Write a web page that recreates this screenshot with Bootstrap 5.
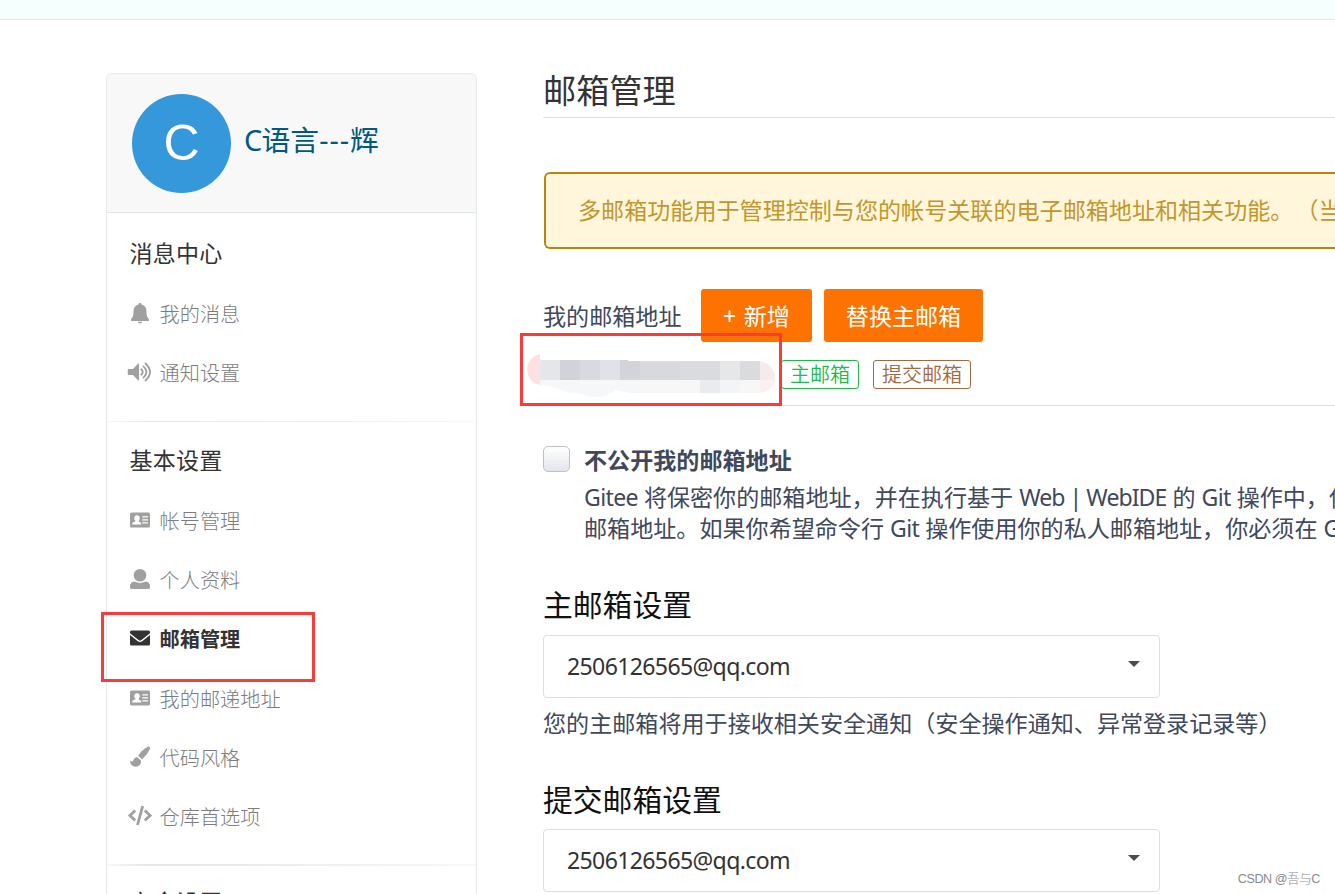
<!DOCTYPE html>
<html lang="zh-CN">
<head>
<meta charset="utf-8">
<meta name="viewport" content="width=device-width, initial-scale=1">
<title>邮箱管理</title>
<link rel="stylesheet" href="https://cdn.jsdelivr.net/npm/bootstrap@5.3.0/dist/css/bootstrap.min.css">
<style>
body{font-family:"Noto Sans","Noto Sans CJK SC",sans-serif;font-size:23.08px;color:#40485b;height:894px;overflow:hidden;line-height:31px;text-spacing-trim:space-all}
.topbar{height:20px;background:#f5fffe;border-bottom:1px solid #e3e9ed}
.layout{padding:53px 0 0 106px;gap:66px;height:874px;overflow:hidden}
.side{width:371px;border:1px solid #e3e9ed;border-bottom:0;border-radius:6px 6px 0 0;height:821px}
.side-head{height:139px;background:#f8f8f8;border-bottom:1px solid #e1e7eb;border-radius:5px 5px 0 0;padding:1px 0 0 25px}
.avatar{width:99px;height:99px;background:#3498db;color:#fff;font:50px "Liberation Sans",sans-serif;padding-bottom:1px}
.uname{color:#005980;font-size:28.8px;margin:-7px 0 0 13px;line-height:40px}
.dash{letter-spacing:1px}
.lat{letter-spacing:-.65px}
.lat-tight{letter-spacing:-.95px}
.sec{padding:9.5px 0 18.5px 22.5px;border-bottom:1.6px solid;border-image:linear-gradient(90deg,#f8f8f8,#e6e6e6 12%,#f7f7f7) 1}
.sec + .sec{border-bottom-width:2px;padding-top:8px}
.sec-title{height:62px;line-height:60px;color:#333;letter-spacing:.2px}
.item{height:59.1px;font-size:20.2px;color:#7c7c7c;font-weight:300;margin-left:-3px}
.item svg{width:26px;height:24px;fill:#a0a0a0;margin:-3px 7px 0 0}
.item.active{color:#333;font-weight:700}
.item.active svg{fill:#333}
.mark-box{position:absolute;border:3px solid #fb3a3a;pointer-events:none}
.main{width:792px}
.page-title{font-size:33.2px;line-height:36px;height:45px;border-bottom:1px solid #e1e3e5;color:#333;font-weight:400}
.notice{margin-top:54px;height:77px;border:2px solid #b8860b;border-right:0;border-radius:6px 0 0 6px;background:#fff6db;color:#c2962b;padding-left:32px;margin-left:1px;overflow:hidden}
.btn-or{height:53px;background:#fe7300;color:#fff;border:0;border-radius:3px;font-size:23.08px;padding:2px 0 0;line-height:31px}
.mail-row{height:64px;border-bottom:1px solid #dcdddf;padding:1px 0 0 238px}
.tagx{height:29px;border:1px solid;border-radius:3px;font-size:20px;font-weight:350;line-height:27px}
.mosaic{position:absolute;left:-18px;top:10px}
.chk{width:27px;height:26px;border:1px solid #bcc0c8;border-radius:5px;background:linear-gradient(#fff,#e3e5ec)}
.sub-title{font-size:29.8px;line-height:40px;color:#111;font-weight:400}
.dropx{width:617px;height:63px;border:1px solid #dcdde5;border-radius:4px;color:#333;padding:0 19px 0 23px}
.arrow{border:6px solid transparent;border-top:6.5px solid #4b4b4b;border-bottom:0;margin-top:-5px}
.wm{position:absolute;right:15px;bottom:6px;font:300 12.6px/18px "Liberation Sans","Noto Sans CJK SC",sans-serif;letter-spacing:-.45px;color:#8a8a8a}
</style>
</head>
<body class="position-relative">
<svg class="d-none">
<symbol id="bell" viewBox="0 0 26 24"><path d="M13 2c1 0 1.500.6 1.500 1.600 3.500.8 5 3.400 5 6.900 0 4.500 1 6 2.500 7.700.5.900 0 1.800-1 1.800H5c-1 0-1.500-.9-1-1.800 1.500-1.700 2.500-3.200 2.500-7.700 0-3.500 1.500-6.100 5-6.900C11.500 2.600 12 2 13 2zM10.800 20.800h4.400a2.200 1.700 0 0 1-4.400 0z"/></symbol>
<symbol id="vol" viewBox="0 0 26 24"><path d="M1 9h5l5-5.200c.5-.5 1-.3 1 .4v15.600c0 .7-.5.900-1 .4L6 15H1.500c-.4 0-.7-.2-.7-.6V9.600c0-.4.300-.6.700-.6z"/><g fill="none" stroke="#a0a0a0" stroke-width="1.900" stroke-linecap="round"><path d="M14.300 9.300q2.900 2.700 0 5.400M16.500 6.400q6 5.600 0 11.200M18.500 3.500q9 8.500 0 17"/></g></symbol>
<symbol id="idc" viewBox="0 0 26 24"><path fill-rule="evenodd" d="M4.500 4.500h17A1.500 1.500 0 0 1 23 6v12a1.500 1.500 0 0 1-1.500 1.500h-17A1.500 1.500 0 0 1 3 18V6A1.500 1.500 0 0 1 4.500 4.500zM10 7.200a2.900 2.900 0 0 0-1.700 5.200v1.200q-3.100.4-3.100 2.900h9.200q0-2.500-2.700-2.900v-1.200A2.900 2.900 0 0 0 10 7.200zM15.300 8.200v1.400H21V8.200zM15.300 11.200v1.400H21v-1.400zM15.300 14.200v1.400H21v-1.400z"/></symbol>
<symbol id="usr" viewBox="0 0 26 24"><circle cx="13" cy="8.300" r="6.300"/><path d="M7.500 14.500q5.500 2.800 11 0 4.500.4 4.500 5v1q0 1.500-1.500 1.500h-17Q3 22 3 20.500v-1q0-4.600 4.500-5z"/></symbol>
<symbol id="env" viewBox="0 0 26 24"><path d="M4.500 4.500h17Q23 4.500 23 6v1.200l-8.500 6.800q-1.500 1.100-3 0L3 7.200V6Q3 4.500 4.500 4.500zM3 9l7.500 6q2.500 1.900 5 0L23 9v9q0 1.500-1.500 1.500h-17Q3 19.500 3 18z"/></symbol>
<symbol id="brush" viewBox="0 0 26 24"><path d="M20.800 1.700q2.700-.7 2.200 2-2.500 6-8 10.800l-3.800-3.700Q14.500 5 20.800 1.700zM10.200 12.100l3.900 3.700Q14 21.500 8.500 21.700 3.500 21.500 3 15.700q1.500 1.200 3 .5 1-3.600 4.200-4.100z"/></symbol>
<symbol id="code" viewBox="0 0 26 24"><g fill="none" stroke="#a0a0a0" stroke-width="2.800"><path d="M8.200 6.500L2.900 11.500l5.300 5M17.800 6.500l5.300 5-5.300 5M15.700 2.200l-5.200 18.800"/></g></symbol>
</svg>
<header class="topbar"></header>
<div class="layout d-flex">
<aside class="side flex-shrink-0">
  <div class="side-head d-flex align-items-center">
    <div class="avatar rounded-circle d-flex align-items-center justify-content-center">C</div>
    <div class="uname"><span class="lat">C</span>语言<span class="dash">---</span>辉</div>
  </div>
  <nav>
    <div class="sec">
      <div class="sec-title">消息中心</div>
      <div class="item d-flex align-items-center"><svg><use href="#bell"/></svg>我的消息</div>
      <div class="item d-flex align-items-center"><svg><use href="#vol"/></svg>通知设置</div>
    </div>
    <div class="sec" style="padding-bottom:17px">
      <div class="sec-title">基本设置</div>
      <div class="item d-flex align-items-center"><svg><use href="#idc"/></svg>帐号管理</div>
      <div class="item d-flex align-items-center"><svg><use href="#usr"/></svg>个人资料</div>
      <div class="item active d-flex align-items-center position-relative"><svg><use href="#env"/></svg>邮箱管理<span class="mark-box" style="left:-25.5px;top:1.4px;width:214px;height:70px"></span></div>
      <div class="item d-flex align-items-center"><svg><use href="#idc"/></svg>我的邮递地址</div>
      <div class="item d-flex align-items-center"><svg><use href="#brush"/></svg>代码风格</div>
      <div class="item d-flex align-items-center"><svg><use href="#code"/></svg>仓库首选项</div>
    </div>
    <div class="sec border-0"><div class="sec-title" style="line-height:57px">安全设置</div></div>
  </nav>
</aside>
<main class="main flex-shrink-0 text-nowrap">
  <h1 class="page-title mb-0">邮箱管理</h1>
  <div class="notice d-flex align-items-center">多邮箱功能用于管理控制与您的帐号关联的电子邮箱地址和相关功能。<span style="margin-left:2px">（当前</span></div>
  <div class="d-flex align-items-center" style="margin-top:40px">
    <span style="width:158px;padding-top:2px">我的邮箱地址</span>
    <button class="btn btn-or" style="width:111px;word-spacing:1.5px">+ 新增</button>
    <button class="btn btn-or" style="width:159px;margin-left:12px">替换主邮箱</button>
  </div>
  <div class="mail-row d-flex align-items-center position-relative">
    <svg class="mosaic" width="258" height="50" viewBox="525 352 258 50">
      <path fill="#fde0e2" d="M540 354v31c-17-4-17-27 0-31z"/>
      <g shape-rendering="crispEdges">
      <path fill="#e4e6e9" d="M540 360h20v20h-20z"/><path fill="#d1d2da" d="M560 360h20v20h-20z"/><path fill="#d9dae0" d="M580 360h20v20h-20z"/><path fill="#e0e2e7" d="M600 360h20v20h-20z"/><path fill="#d2d4da" d="M620 360h8v1h12v19h-20z"/><path fill="#d8d9dd" d="M640 361h40v19h-40z"/><path fill="#dadbde" d="M680 361h20v19h-20z"/><path fill="#d9dbdf" d="M700 361h20v19h-20zM740 361h20v19h-20z"/><path fill="#e6e7e9" d="M720 361h20v19h-20z"/>
      <path fill="#f7f7f8" d="M640 380h120v13H626z"/><path fill="#eaebef" d="M700 380h20v13h-20z"/><path fill="#f3f4f8" d="M720 380h20v13h-20z"/></g>
      <path fill="#f6f7f9" d="M540 380h100v13h-11l-14-3q-12 11-30 5-6-2-15-2l-20-7-10-1z"/>
      <path fill="#f5eaec" d="M760 361q12 3 15 14v5h-15z"/><path fill="#fdf0f1" d="M760 380h16q-3 11-16 13z"/>
    </svg>
    <span class="tagx text-center" style="width:78px;color:#21ba45">主邮箱</span>
    <span class="tagx text-center" style="width:98px;margin-left:14px;color:#a5673f">提交邮箱</span>
    <span class="mark-box" style="left:-23px;top:-9px;width:262px;height:73px"></span>
  </div>
  <div class="d-flex" style="margin-top:40px;gap:14px">
    <span class="chk flex-shrink-0"></span>
    <div style="margin-top:-1px"><div class="fw-bold" style="height:37px">不公开我的邮箱地址</div>
    <div><span class="lat">Gitee</span> 将保密你的邮箱地址，并在执行基于 <span class="lat-tight">Web | WebIDE</span> 的 <span class="lat">Git</span> 操作中，使用<br>邮箱地址。如果你希望命令行 <span class="lat">Git</span> 操作使用你的私人邮箱地址，你必须在 <span class="lat">Git</span></div></div>
  </div>
  <h2 class="sub-title mb-0" style="margin-top:41px;height:50px">主邮箱设置</h2>
  <div class="dropx d-flex align-items-center justify-content-between"><span class="lat">2506126565@qq.com</span><span class="arrow"></span></div>
  <div style="height:82px;padding-top:10px">您的主邮箱将用于接收相关安全通知（安全操作通知、异常登录记录等）</div>
  <h2 class="sub-title mb-0" style="height:49px">提交邮箱设置</h2>
  <div class="dropx d-flex align-items-center justify-content-between"><span class="lat">2506126565@qq.com</span><span class="arrow"></span></div>
</main>
</div>
<div class="wm">CSDN @吾与C</div>
<script src="https://cdn.jsdelivr.net/npm/bootstrap@5.3.0/dist/js/bootstrap.bundle.min.js"></script>
</body>
</html>
